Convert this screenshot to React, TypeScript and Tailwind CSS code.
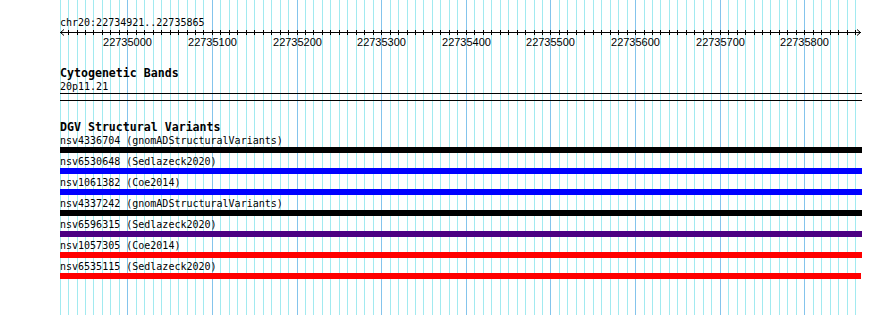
const START = 22734921
const PX_PER_BP = 0.84625
const LEFT = 60.45

const toX = (bp: number) => Math.round(LEFT + (bp - START) * PX_PER_BP) + 0.5

const GRID: number[] = []
for (let bp = 22734920; bp <= 22735860; bp += 10) GRID.push(bp)

const MAJOR = [22735000, 22735100, 22735200, 22735300, 22735400, 22735500, 22735600, 22735700, 22735800]

const TRACKS = [
  { name: 'nsv4336704', src: 'gnomADStructuralVariants', color: 'bg-black', w: 'w-[802px]' },
  { name: 'nsv6530648', src: 'Sedlazeck2020', color: 'bg-[#0000ff]', w: 'w-[802px]' },
  { name: 'nsv1061382', src: 'Coe2014', color: 'bg-[#0000ff]', w: 'w-[802px]' },
  { name: 'nsv4337242', src: 'gnomADStructuralVariants', color: 'bg-black', w: 'w-[802px]' },
  { name: 'nsv6596315', src: 'Sedlazeck2020', color: 'bg-[#4b0082]', w: 'w-[802px]' },
  { name: 'nsv1057305', src: 'Coe2014', color: 'bg-[#ff0000]', w: 'w-[802px]' },
  { name: 'nsv6535115', src: 'Sedlazeck2020', color: 'bg-[#ff0000]', w: 'w-[801px]' },
]

const mono = "font-['DejaVu_Sans_Mono','Liberation_Mono',monospace]"

function Grid() {
  return (
    <svg className="absolute inset-0" width={890} height={315} shapeRendering="crispEdges">
      {GRID.map(bp => (
        <line
          key={bp}
          x1={toX(bp)}
          x2={toX(bp)}
          y1={0}
          y2={315}
          stroke={bp % 100 === 0 ? '#84c4ec' : '#a2eaf0'}
          strokeWidth={1}
        />
      ))}
    </svg>
  )
}

function Ruler() {
  return (
    <svg width={890} height={20} className="block" shapeRendering="crispEdges">
      <line x1={60} x2={861} y1={3.5} y2={3.5} stroke="black" />
      {GRID.filter(bp => bp > START && bp < 22735865).map(bp => (
        <line key={bp} x1={toX(bp)} x2={toX(bp)} y1={0.5} y2={6} stroke="black" />
      ))}
      <path d="M64 0.5 L60.5 3.5 L64 6.5" fill="none" stroke="black" shapeRendering="auto" />
      <path d="M857 0.5 L860.5 3.5 L857 6.5" fill="none" stroke="black" shapeRendering="auto" />
      {MAJOR.map(bp => (
        <text
          key={bp}
          x={toX(bp)}
          y={16.5}
          textAnchor="middle"
          fontFamily="'Liberation Sans', Arial, sans-serif"
          fontSize={11}
          fill="black"
        >
          {bp}
        </text>
      ))}
    </svg>
  )
}

export default function App() {
  return (
    <div className="relative w-[890px] h-[315px] overflow-hidden bg-white text-black">
      <Grid />
      <div className="relative flex flex-col pt-[16px]">
        <div className={`ml-[60px] h-[13px] text-[10px] leading-[13px] ${mono}`}>chr20:22734921..22735865</div>
        <Ruler />
        <div className="h-[18px]" />
        <div className={`ml-[60px] h-[13px] text-[11.6px] font-bold leading-[13px] ${mono}`}>Cytogenetic Bands</div>
        <div className={`ml-[60px] h-[13px] text-[10px] leading-[13px] ${mono}`}>20p11.21</div>
        <div className="ml-[60px] w-[802px] h-px bg-black" />
        <div className="h-[6px]" />
        <div className="ml-[60px] w-[802px] h-px bg-black" />
        <div className="h-[20px]" />
        <div className={`ml-[60px] h-[13px] text-[11.6px] font-bold leading-[13px] ${mono}`}>DGV Structural Variants</div>
        {TRACKS.map(t => (
          <div key={t.name} className="ml-[60px] flex flex-col mb-[2px]">
            <div className={`h-[13px] text-[10px] leading-[13px] whitespace-pre ${mono}`}>
              {t.name} ({t.src})
            </div>
            <div className={`h-[6px] ${t.w} ${t.color}`} />
          </div>
        ))}
      </div>
    </div>
  )
}
